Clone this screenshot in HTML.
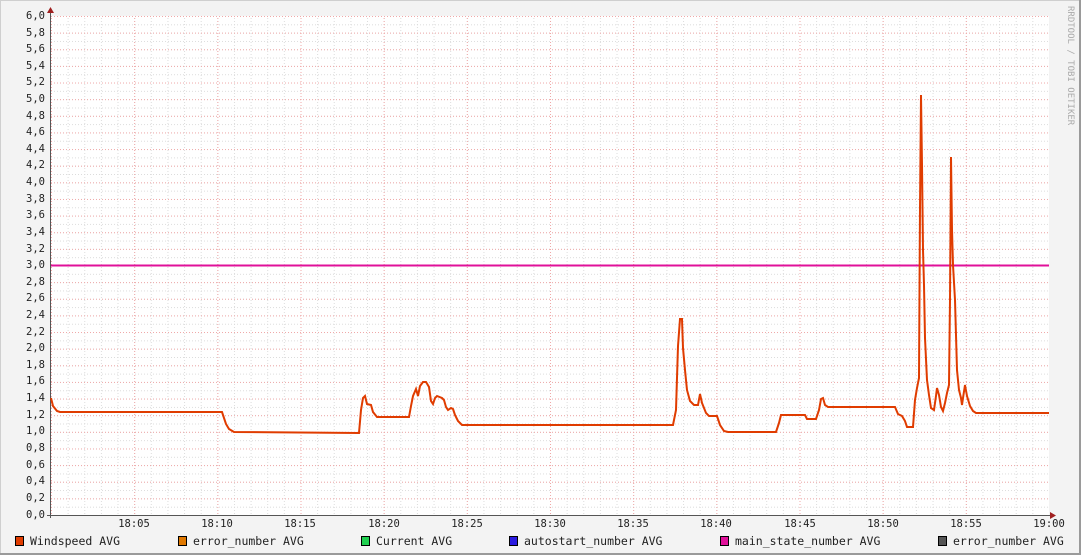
<!DOCTYPE html>
<html><head><meta charset="utf-8"><style>
html,body{margin:0;padding:0;background:#f3f3f3;}
svg{display:block;}
text{font-family:"DejaVu Sans Mono","Liberation Mono",monospace;}
</style></head><body>
<svg width="1081" height="555" xmlns="http://www.w3.org/2000/svg">
<defs>
<pattern id="minv" x="51" y="0" width="16.633" height="555" patternUnits="userSpaceOnUse">
<line x1="0.5" y1="0" x2="0.5" y2="555" stroke="#dcdcdc" stroke-width="1" stroke-dasharray="1,2"/>
</pattern>
<pattern id="minh" x="0" y="16" width="1081" height="8.317" patternUnits="userSpaceOnUse">
<line x1="0" y1="0.5" x2="1081" y2="0.5" stroke="#dcdcdc" stroke-width="1" stroke-dasharray="1,2"/>
</pattern>
<pattern id="majv" x="51" y="0" width="83.167" height="555" patternUnits="userSpaceOnUse">
<line x1="0.5" y1="0" x2="0.5" y2="555" stroke="#f0a8a8" stroke-width="1" stroke-dasharray="1,2"/>
</pattern>
<pattern id="majh" x="0" y="16" width="1081" height="16.633" patternUnits="userSpaceOnUse">
<line x1="0" y1="0.5" x2="1081" y2="0.5" stroke="#f0a8a8" stroke-width="1" stroke-dasharray="1,2"/>
</pattern>
</defs>
<rect x="0" y="0" width="1081" height="555" fill="#f3f3f3"/>
<rect x="0.5" y="0.5" width="1079" height="553" fill="none" stroke="#cfcfcf"/>
<line x1="0" y1="554" x2="1081" y2="554" stroke="#9a9a9a" stroke-width="2"/>
<line x1="1080" y1="0" x2="1080" y2="555" stroke="#9a9a9a" stroke-width="2"/>
<rect x="51" y="16" width="998" height="499" fill="#fff"/>
<rect x="51" y="16" width="998" height="499" fill="url(#minv)"/>
<rect x="51" y="16" width="998" height="499" fill="url(#minh)"/>
<rect x="51" y="16" width="998" height="499" fill="url(#majv)"/>
<rect x="51" y="16" width="998" height="499" fill="url(#majh)"/>
<!-- axes -->
<line x1="50.5" y1="12" x2="50.5" y2="518" stroke="#555"/>
<line x1="47" y1="515.5" x2="1052" y2="515.5" stroke="#555"/>
<polygon points="47,13 54,13 50.5,7" fill="#a02020"/>
<polygon points="1050,512 1050,519 1056,515.5" fill="#a02020"/>
<!-- y labels -->
<g font-size="10.5" fill="#222" text-anchor="end">
<text x="45" y="19">6,0</text><text x="45" y="36">5,8</text><text x="45" y="52">5,6</text><text x="45" y="69">5,4</text><text x="45" y="85">5,2</text><text x="45" y="102">5,0</text><text x="45" y="119">4,8</text><text x="45" y="135">4,6</text><text x="45" y="152">4,4</text><text x="45" y="168">4,2</text><text x="45" y="185">4,0</text><text x="45" y="202">3,8</text><text x="45" y="218">3,6</text><text x="45" y="235">3,4</text><text x="45" y="252">3,2</text><text x="45" y="268">3,0</text><text x="45" y="285">2,8</text><text x="45" y="301">2,6</text><text x="45" y="318">2,4</text><text x="45" y="335">2,2</text><text x="45" y="351">2,0</text><text x="45" y="368">1,8</text><text x="45" y="384">1,6</text><text x="45" y="401">1,4</text><text x="45" y="418">1,2</text><text x="45" y="434">1,0</text><text x="45" y="451">0,8</text><text x="45" y="468">0,6</text><text x="45" y="484">0,4</text><text x="45" y="501">0,2</text><text x="45" y="518">0,0</text>
</g>
<g font-size="10.5" fill="#222" text-anchor="middle">
<text x="134" y="527">18:05</text><text x="217" y="527">18:10</text><text x="300" y="527">18:15</text><text x="384" y="527">18:20</text><text x="467" y="527">18:25</text><text x="550" y="527">18:30</text><text x="633" y="527">18:35</text><text x="716" y="527">18:40</text><text x="800" y="527">18:45</text><text x="883" y="527">18:50</text><text x="966" y="527">18:55</text><text x="1049" y="527">19:00</text>
</g>
<text transform="translate(1068,6) rotate(90)" font-size="9" fill="#aaa">RRDTOOL / TOBI OETIKER</text>
<!-- magenta line -->
<line x1="51" y1="265.5" x2="1049" y2="265.5" stroke="#e0109a" stroke-width="2"/>
<!-- windspeed -->
<polyline fill="none" stroke="#e03c00" stroke-width="2" stroke-linejoin="miter" points="51,398 53,406 57,411 60,412 222,412 226,424 229,429 234,432 359,433 361,410 363,398 365,396 367,404 371,405 373,412 377,417 409,417 411,406 413,396 416,389 418,396 420,386 423,382 426,382 429,387 431,401 433,404 435,398 437,396 442,398 444,400 446,407 448,410 451,408 453,409 455,415 458,421 462,425 673,425 676,410 678,346 680,319 682,319 683,348 685,370 687,390 690,401 694,405 698,405 700,394 702,403 706,413 709,416 717,416 720,425 724,431 728,432 776,432 779,423 781,415 805,415 807,419 816,419 819,410 821,399 823,398 825,405 828,407 895,407 898,414 902,416 905,421 907,427 913,427 915,400 917,388 919,378 920,208 921,95 922,165 923,250 924,285 925,338 927,380 929,395 931,408 934,410 936,396 937,388 939,395 941,407 943,411 945,403 947,393 949,385 950,300 951,157 952,230 953,265 955,300 957,370 959,390 961,398 962,405 963,398 965,385 967,396 970,406 973,411 976,413 1049,413"/>
<!-- legend -->
<g font-size="11.5" fill="#222">
<rect x="15.5" y="536.5" width="8" height="9" fill="#e03c00" stroke="#000"/><text x="30" y="545">Windspeed AVG</text>
<rect x="178.5" y="536.5" width="8" height="9" fill="#e07800" stroke="#000"/><text x="193" y="545">error_number AVG</text>
<rect x="361.5" y="536.5" width="8" height="9" fill="#20d050" stroke="#000"/><text x="376" y="545">Current AVG</text>
<rect x="509.5" y="536.5" width="8" height="9" fill="#2a1ae0" stroke="#000"/><text x="524" y="545">autostart_number AVG</text>
<rect x="720.5" y="536.5" width="8" height="9" fill="#e0109a" stroke="#000"/><text x="735" y="545">main_state_number AVG</text>
<rect x="938.5" y="536.5" width="8" height="9" fill="#555" stroke="#000"/><text x="953" y="545">error_number AVG</text>
</g>
</svg>
</body></html>
